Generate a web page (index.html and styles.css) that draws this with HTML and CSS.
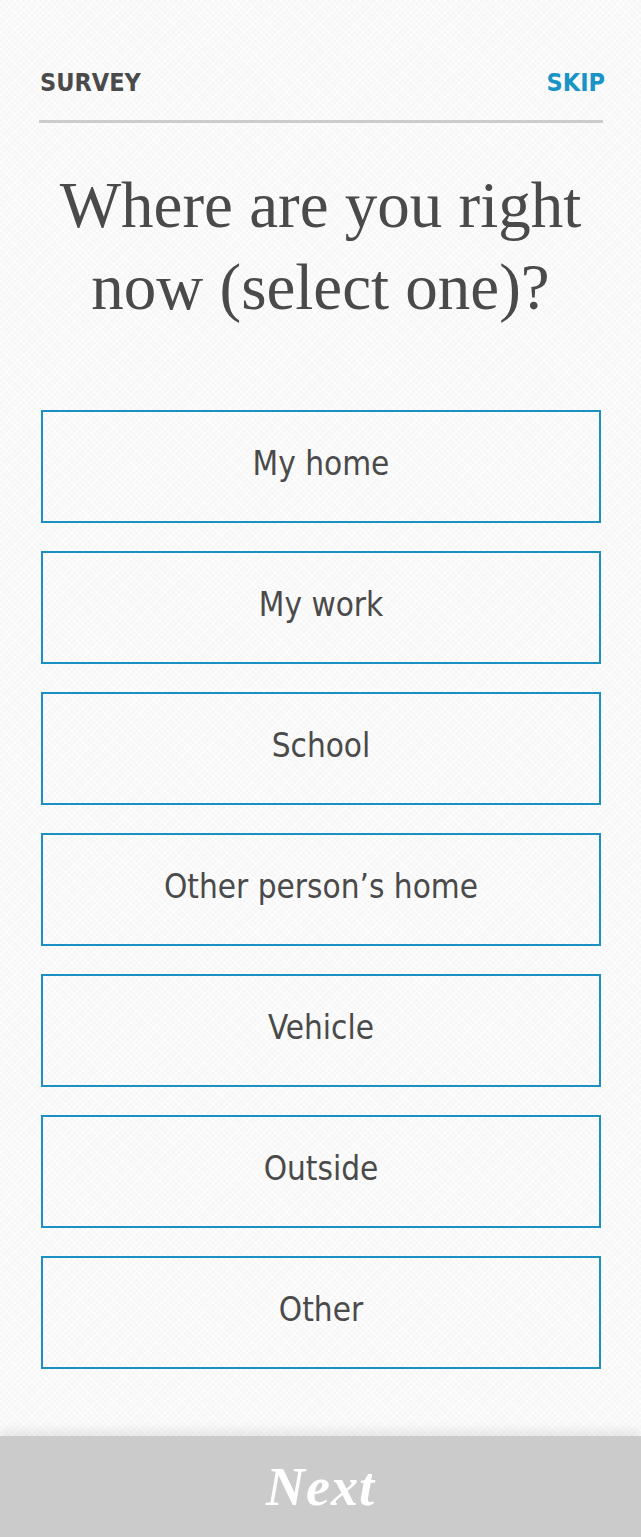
FILE: index.html
```html
<!DOCTYPE html>
<html lang="en">
<head>
<meta charset="utf-8">
<title>Survey</title>
<link rel="stylesheet" href="styles.css">
</head>
<body>
<div class="page">
  <main class="content">
    <header class="topbar">
      <span class="brand">SURVEY</span>
      <a class="skip" href="#">SKIP</a>
    </header>
    <h1 class="question">Where are you right now (select one)?</h1>
    <ul class="options">
      <li><button class="option" type="button">My home</button></li>
      <li><button class="option" type="button">My work</button></li>
      <li><button class="option" type="button">School</button></li>
      <li><button class="option" type="button">Other person’s home</button></li>
      <li><button class="option" type="button">Vehicle</button></li>
      <li><button class="option" type="button">Outside</button></li>
      <li><button class="option" type="button">Other</button></li>
    </ul>
  </main>
  <footer class="footer">
    <button class="next" type="button">Next</button>
  </footer>
</div>
</body>
</html>
```

FILE: styles.css
```css
html, body {
  margin: 0;
  padding: 0;
}
body {
  background-color: #f7f7f7;
  background-image:
    repeating-linear-gradient(45deg, rgba(255,255,255,0.7) 0 1px, transparent 1px 4px),
    repeating-linear-gradient(-45deg, rgba(255,255,255,0.7) 0 1px, transparent 1px 4px);
  color: #4a4a4a;
  font-family: "DejaVu Sans Condensed", "DejaVu Sans", sans-serif;
}
.page {
  min-height: 100vh;
  display: flex;
  flex-direction: column;
}
.content {
  flex: 1;
  padding: 0 0 67px;
}
.topbar {
  margin: 0 38px 0 39px;
  padding: 68px 0 22px 1px;
  border-bottom: 3px solid #cccccc;
  display: flex;
  justify-content: space-between;
  align-items: baseline;
  font-size: 25px;
  line-height: 30px;
  font-weight: bold;
}
.brand {
  color: #4a4a4a;
}
.skip {
  color: #1a93c6;
  text-decoration: none;
  margin-right: -2px;
}
.question {
  margin: 41px 40px 0;
  font-family: "Liberation Serif", "Times New Roman", serif;
  font-weight: normal;
  font-size: 65px;
  line-height: 82px;
  text-align: center;
  color: #4a4a4a;
}
.options {
  list-style: none;
  margin: 82px 40px 0 41px;
  padding: 0;
  display: flex;
  flex-direction: column;
  gap: 28px;
}
.option {
  display: block;
  width: 100%;
  height: 113px;
  margin: 0;
  padding: 0 0 6px;
  border: 2px solid #1d90c2;
  background: transparent;
  color: #4a4a4a;
  font-family: "DejaVu Sans Condensed", "DejaVu Sans", sans-serif;
  font-size: 33px;
  text-align: center;
  cursor: pointer;
}
.footer {
  height: 101px;
  background: #cbcbcb;
  box-shadow: 0 -6px 10px rgba(0, 0, 0, 0.08);
  display: flex;
  align-items: center;
  justify-content: center;
}
.next {
  border: 0;
  background: transparent;
  color: #ffffff;
  font-family: "Liberation Serif", "Times New Roman", serif;
  font-style: italic;
  font-weight: bold;
  font-size: 54px;
  letter-spacing: 1px;
  padding: 0;
  cursor: pointer;
}
```
